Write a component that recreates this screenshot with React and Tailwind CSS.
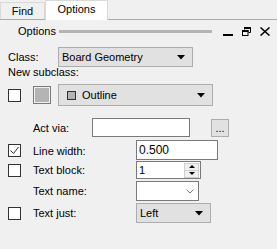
import React from "react";

const font = { fontFamily: '"Liberation Sans", Arial, sans-serif' };

function Arrow() {
  return (
    <svg width="8" height="5" viewBox="0 0 8 5" className="block">
      <path d="M0 0h8L4 4.5z" fill="#000" />
    </svg>
  );
}

function Checkbox({ checked }) {
  return (
    <div className="w-[13px] h-[13px] shrink-0 border border-[#333] bg-white flex items-center justify-center">
      {checked && (
        <svg width="11" height="11" viewBox="0 0 11 11" className="block">
          <path d="M1.5 5.5l3 3 5-6.5" stroke="#333" strokeWidth="1" fill="none" />
        </svg>
      )}
    </div>
  );
}

function Dropdown({ width, height, children }) {
  return (
    <div
      className="flex items-center justify-between bg-[#e1e1e1] border border-[#adadad] pl-[3px] pr-[7px] shrink-0"
      style={{ width, height }}
    >
      <div className="flex items-center">{children}</div>
      <Arrow />
    </div>
  );
}

function Row({ checkbox, label, children, h, mt }) {
  return (
    <div className="flex items-center" style={{ height: h, marginTop: mt }}>
      <div className="w-[25px] shrink-0">{checkbox !== undefined && <Checkbox checked={checkbox} />}</div>
      <div className="w-[103px] shrink-0">{label}</div>
      {children}
    </div>
  );
}

export default function App() {
  return (
    <div className="w-[277px] h-[249px] bg-[#f0f0f0] text-[11px] text-black overflow-hidden" style={font}>
      {/* tabs */}
      <div className="h-[20px] flex items-end border-b border-[#acacac]">
        <div className="w-[45px] h-[17px] border border-b-0 border-[#d9d9d9] bg-[#f0f0f0] flex items-center justify-center">
          Find
        </div>
        <div className="w-[63px] h-[20px] -mb-px bg-white border border-b-0 border-[#d9d9d9] flex items-center justify-center pb-[2px]">
          Options
        </div>
      </div>

      {/* title */}
      <div className="h-[22px] flex items-center pl-[18px]">
        <span>Options</span>
        <div className="ml-[3px] w-[153px] h-[3px] bg-[#b4b4b4]" />
        <svg width="11" height="9" viewBox="0 0 11 9" className="ml-[11px] mt-[2px] block">
          <rect x="0" y="6" width="10" height="2" fill="#000" />
        </svg>
        <svg width="9" height="9" viewBox="0 0 9 9" className="ml-[8px] block">
          <path d="M2.5 2.5V0.5h6v5H6.5" stroke="#000" strokeWidth="1" fill="none" />
          <rect x="2" y="0" width="7" height="2" fill="#000" />
          <rect x="0.5" y="3.5" width="5.5" height="5" stroke="#000" strokeWidth="1" fill="none" />
          <rect x="0" y="3" width="6.5" height="2" fill="#000" />
        </svg>
        <svg width="10" height="9" viewBox="0 0 10 9" className="ml-[9px] block">
          <path d="M0.5 0.5l9 8M9.5 0.5l-9 8" stroke="#000" strokeWidth="1.5" />
        </svg>
      </div>

      <div className="pl-[8px]">
        {/* class */}
        <div className="flex items-center h-[20px] mt-[5px]">
          <div className="w-[50px]">Class:</div>
          <Dropdown width={135} height={20}>
            <span>Board Geometry</span>
          </Dropdown>
        </div>

        <div className="h-[12px] leading-[12px] mt-[-1px]">New subclass:</div>

        {/* subclass */}
        <div className="flex items-center h-[22px] mt-[6px]">
          <Checkbox />
          <div className="ml-[12px] w-[18px] h-[18px] border border-[#7a7a7a] bg-[#f0f0f0] p-px">
            <div className="w-full h-full bg-[#b4b4b4]" />
          </div>
          <div className="ml-[7px]">
            <Dropdown width={155} height={22}>
              <div className="ml-[5px] w-[9px] h-[9px] border border-[#333] bg-[#b4b4b4]" />
              <span className="ml-[6px]">Outline</span>
            </Dropdown>
          </div>
        </div>

        {/* act via */}
        <div className="flex items-center h-[19px] mt-[12px]">
          <div className="w-[25px] shrink-0" />
          <div className="w-[59px] shrink-0 pt-[2px]">Act via:</div>
          <div className="w-[98px] h-[19px] bg-white border border-[#7a7a7a]" />
          <div className="ml-[21px] w-[18px] h-[18px] bg-[#e1e1e1] border border-[#adadad] flex items-center justify-center leading-none pt-[1px]">
            ...
          </div>
        </div>

        <Row checkbox={true} label={<span className="block pt-[2px]">Line width:</span>} h={20} mt={3}>
          <div className="w-[82px] h-[20px] bg-white border border-[#7a7a7a] flex items-center pl-[2px] text-[12px]">
            0.500
          </div>
        </Row>

        <Row checkbox={false} label="Text block:" h={18} mt={1}>
          <div className="w-[65px] h-[18px] bg-white border border-[#7a7a7a] flex items-center justify-between pl-[2px] pr-px">
            <span>1</span>
            <div className="w-[15px] h-[15px] flex flex-col">
              <div className="flex-1 bg-[#f0f0f0] border border-[#d0d0d0] flex items-center justify-center">
                <svg width="6" height="3" viewBox="0 0 6 3" className="block">
                  <path d="M0 3h6L3 0z" fill="#000" />
                </svg>
              </div>
              <div className="flex-1 bg-[#f0f0f0] border border-t-0 border-[#d0d0d0] flex items-center justify-center">
                <svg width="6" height="3" viewBox="0 0 6 3" className="block">
                  <path d="M0 0h6L3 3z" fill="#000" />
                </svg>
              </div>
            </div>
          </div>
        </Row>

        <Row label="Text name:" h={20} mt={2}>
          <div className="w-[63px] h-[20px] bg-white border border-[#7a7a7a] flex items-center justify-end pr-[4px]">
            <svg width="8" height="5" viewBox="0 0 8 5" className="block">
              <path d="M0.5 0.5l3.5 3.5 3.5-3.5" stroke="#777" strokeWidth="1" fill="none" />
            </svg>
          </div>
        </Row>

        <Row checkbox={false} label="Text just:" h={20} mt={2}>
          <Dropdown width={75} height={20}>
            <span>Left</span>
          </Dropdown>
        </Row>
      </div>
    </div>
  );
}
